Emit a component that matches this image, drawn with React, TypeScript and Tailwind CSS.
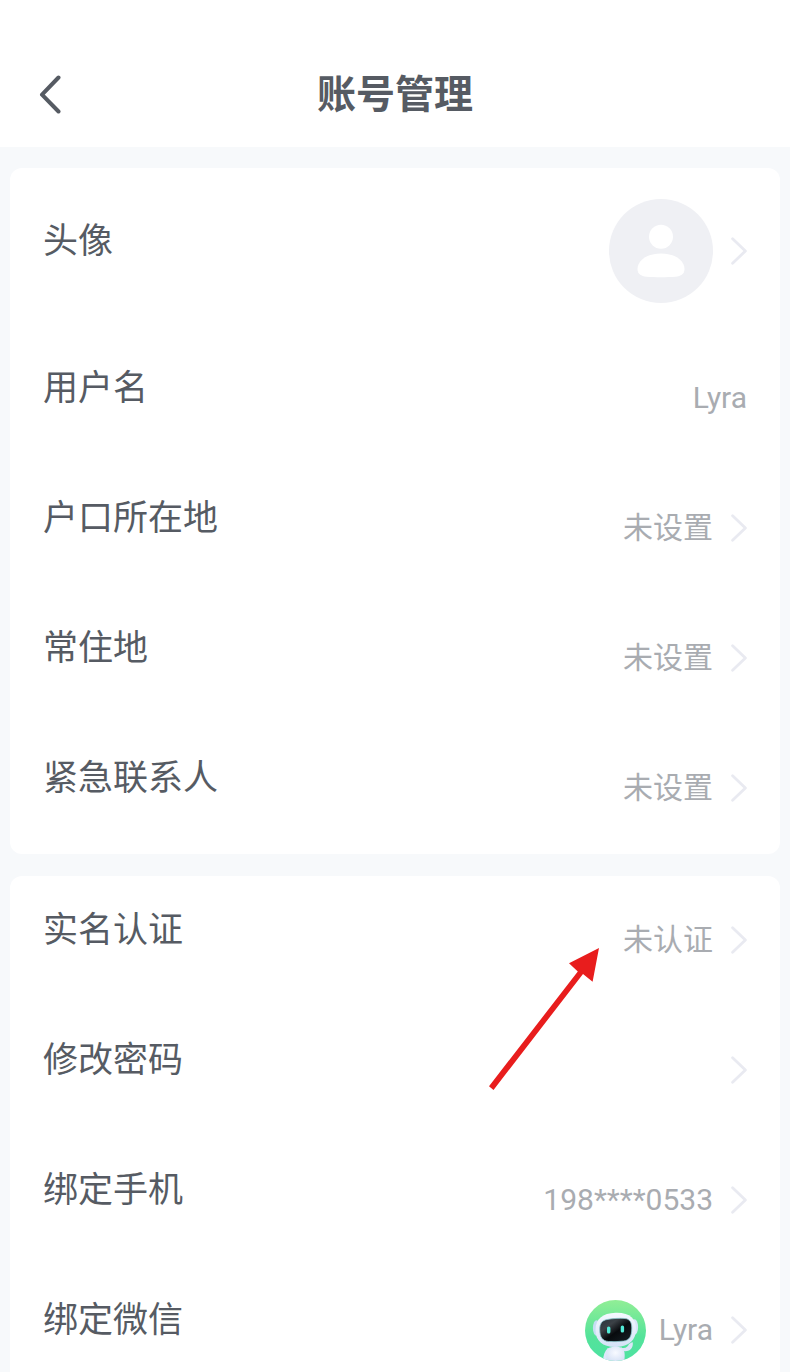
import type { ReactNode } from "react";

/* ── Icons ── */

function BackIcon() {
  return (
    <svg width="24" height="40" viewBox="0 0 24 40" fill="none" aria-hidden="true">
      <path
        d="M20.5 2.5L4 19.7 20.5 36.5"
        stroke="#565b63"
        strokeWidth="4"
        strokeLinecap="round"
        strokeLinejoin="round"
      />
    </svg>
  );
}

function ChevronIcon() {
  return (
    <svg
      className="shrink-0"
      width="16"
      height="28"
      viewBox="0 0 16 28"
      fill="none"
      aria-hidden="true"
    >
      <path
        d="M1.6 1.8L14.4 14 1.6 26.2"
        stroke="#e9eaf1"
        strokeWidth="2.8"
        strokeLinecap="round"
        strokeLinejoin="round"
      />
    </svg>
  );
}

function DefaultAvatar() {
  return (
    <svg width="104" height="104" viewBox="0 0 104 104" role="img" aria-label="头像">
      <circle cx="52" cy="52" r="52" fill="#eff0f4" />
      <circle cx="52" cy="37.7" r="12" fill="#fff" />
      <path
        d="M52 54.5C66 54.5 75.5 61.5 75.5 70c0 5-3.5 7.2-9 7.7-8.5.6-20.5.6-29 0-5.5-.5-9-2.7-9-7.7C28.5 61.5 38 54.5 52 54.5z"
        fill="#fff"
      />
    </svg>
  );
}

function RobotAvatar() {
  return (
    <svg width="61" height="61" viewBox="0 0 61 61" role="img" aria-label="Lyra">
      <defs>
        <linearGradient id="robot-bg" x1="0" y1="0" x2="0" y2="1">
          <stop offset="0" stopColor="#91ee96" />
          <stop offset="0.6" stopColor="#54e39a" />
          <stop offset="1" stopColor="#4de2a2" />
        </linearGradient>
        <linearGradient id="robot-shell" x1="0" y1="0" x2="0" y2="1">
          <stop offset="0" stopColor="#f5f9ff" />
          <stop offset="1" stopColor="#d4e2f7" />
        </linearGradient>
        <radialGradient id="robot-body" cx="0.5" cy="0.4" r="0.65">
          <stop offset="0" stopColor="#f8faff" />
          <stop offset="1" stopColor="#d3dff5" />
        </radialGradient>
        <linearGradient id="robot-face" x1="0" y1="0" x2="1" y2="1">
          <stop offset="0" stopColor="#26343c" />
          <stop offset="0.3" stopColor="#3b4146" />
          <stop offset="0.55" stopColor="#080b0e" />
          <stop offset="1" stopColor="#172127" />
        </linearGradient>
        <clipPath id="robot-clip">
          <circle cx="30.5" cy="30.5" r="30.5" />
        </clipPath>
      </defs>
      <g clipPath="url(#robot-clip)">
        <rect width="61" height="61" fill="url(#robot-bg)" />
        <path
          d="M36 47.5c4 1.5 7-.5 8-3.5l3.5-2c1 2 0 7-3.5 8.5-3 1-6 .8-8-.5z"
          fill="#dbe6f8"
        />
        <path d="M23 48c-3.5 3-5 8-5 14h6z" fill="#dfe8fa" />
        <path
          d="M22.5 48.5c4-2.5 12-2.5 16 0 1.5 4 1.5 9 .5 13.5H22c-1-4.5-1-9.5.5-13.5z"
          fill="url(#robot-body)"
        />
        <ellipse cx="11.5" cy="28" rx="3.6" ry="7.8" fill="#c6ddf3" />
        <ellipse cx="49.5" cy="27" rx="3.6" ry="7.8" fill="#d9e6f8" />
        <path
          d="M30.5 12.8C45 12.3 51 19 51 29c0 11-7 17.5-19.5 18C18 47.500 10.500 41 10.500 30 10.500 19 17.500 13.300 30.500 12.800z"
          fill="url(#robot-shell)"
        />
        <path
          d="M22 19.5c5-1 13-1.5 18-1 4.5.5 6.800 3.500 6.800 9.500 0 9-2.800 12.500-8.300 13.100-5 .6-10 .7-15 .4-6-.5-8.800-4.500-8.800-12 0-6 2.300-9 7.300-10z"
          fill="url(#robot-face)"
          stroke="#8fc9cf"
          strokeWidth="0.8"
        />
        <rect x="22" y="26.5" width="3.4" height="7" rx="1.6" fill="#52ead6" />
        <rect x="35.7" y="25.5" width="3.4" height="7" rx="1.6" fill="#52ead6" />
      </g>
    </svg>
  );
}

function PointerArrow() {
  return (
    <svg
      className="pointer-events-none absolute top-[72px] right-[181px]"
      width="110"
      height="142"
      viewBox="0 0 110 142"
      aria-hidden="true"
    >
      <path
        d="M0 138.2L88.8 23.5 80 15.3 110 0 103.6 33.7 94 26 4.5 142z"
        fill="#e81d1d"
      />
    </svg>
  );
}

/* ── Rows ── */

interface RowProps {
  label: string;
  children?: ReactNode;
  tall?: boolean;
  editable?: boolean;
  marked?: boolean;
}

function Row({ label, children, tall, editable = true, marked }: RowProps) {
  const className = `flex w-full items-center justify-between px-[33px] text-left ${
    tall ? "h-[166px]" : "h-[130px] pb-0.5"
  }`;
  const content = (
    <>
      <span className="pb-[18px] text-[35px] leading-[50px] text-[#565b63]">{label}</span>
      <span className="flex items-center gap-[18px] text-[30px] leading-10 text-[#a9acb1]">
        {children}
        {editable && <ChevronIcon />}
      </span>
    </>
  );

  return (
    <li className="relative">
      {editable ? (
        <button type="button" className={className}>
          {content}
        </button>
      ) : (
        <div className={className}>{content}</div>
      )}
      {marked && <PointerArrow />}
    </li>
  );
}

function Card({ children }: { children: ReactNode }) {
  return <ul className="shrink-0 rounded-xl bg-white">{children}</ul>;
}

/* ── Page ── */

export default function App() {
  return (
    <div className="flex h-screen flex-col overflow-hidden bg-[#f7f9fb] font-[Roboto,'Noto_Sans_CJK_SC',sans-serif]">
      <header className="grid h-[147px] shrink-0 grid-cols-[1fr_auto_1fr] items-center bg-white px-[38px] pt-[42px]">
        <button type="button" aria-label="返回" className="justify-self-start">
          <BackIcon />
        </button>
        <h1 className="text-[39px] leading-[56px] font-bold text-[#565b63]">账号管理</h1>
      </header>

      <main className="flex flex-col gap-[22px] px-2.5 pt-[21px]">
        <Card>
          <Row label="头像" tall>
            <DefaultAvatar />
          </Row>
          <Row label="用户名" editable={false}>
            Lyra
          </Row>
          <Row label="户口所在地">未设置</Row>
          <Row label="常住地">未设置</Row>
          <Row label="紧急联系人">未设置</Row>
        </Card>

        <Card>
          <Row label="实名认证" marked>
            未认证
          </Row>
          <Row label="修改密码" />
          <Row label="绑定手机">198****0533</Row>
          <Row label="绑定微信">
            <span className="flex items-center gap-[13px]">
              <RobotAvatar />
              Lyra
            </span>
          </Row>
        </Card>
      </main>
    </div>
  );
}
